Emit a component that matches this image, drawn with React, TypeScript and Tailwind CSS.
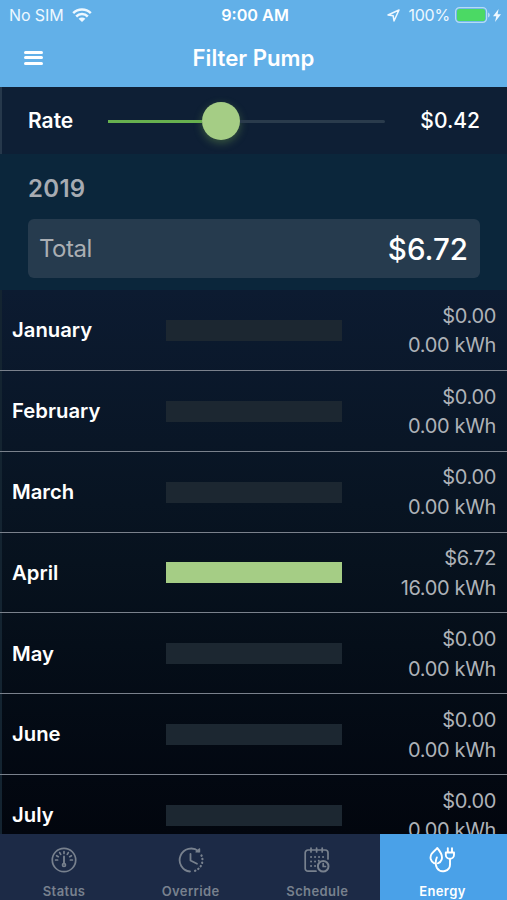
import { ReactNode } from 'react'

type Month = { name: string; cost: string; usage: string; active?: boolean }

const months: Month[] = [
  { name: 'January', cost: '$0.00', usage: '0.00 kWh' },
  { name: 'February', cost: '$0.00', usage: '0.00 kWh' },
  { name: 'March', cost: '$0.00', usage: '0.00 kWh' },
  { name: 'April', cost: '$6.72', usage: '16.00 kWh', active: true },
  { name: 'May', cost: '$0.00', usage: '0.00 kWh' },
  { name: 'June', cost: '$0.00', usage: '0.00 kWh' },
  { name: 'July', cost: '$0.00', usage: '0.00 kWh' },
]

function WifiIcon() {
  return (
    <svg width="20" height="14" viewBox="0 0 20 14" fill="none" stroke="currentColor" strokeWidth="2.5">
      <path d="M1.2 5.2a12.4 12.4 0 0 1 17.6 0" />
      <path d="M4.2 8.500a8.200 8.200 0 0 1 11.600 0" />
      <path d="M6.600 10.800a4.800 4.800 0 0 1 6.800 0L10 14z" fill="currentColor" stroke="none" />
    </svg>
  )
}

function LocationIcon() {
  return (
    <svg width="13" height="13" viewBox="0 0 13 13" fill="none" stroke="currentColor" strokeWidth="1.5" strokeLinejoin="round">
      <path d="M12 1 1 6l5.200.8L7 12z" />
    </svg>
  )
}

function BatteryIcon() {
  return (
    <svg width="36" height="16" viewBox="0 0 36 16" fill="none">
      <rect x="0.6" y="0.6" width="31" height="14.800" rx="4" stroke="#b5dbf5" strokeWidth="1.200" />
      <rect x="2" y="2" width="28.200" height="12" rx="2.600" fill="#4bd964" />
      <path d="M33 5.500c2.400.8 2.400 4.200 0 5z" fill="#b5dbf5" />
    </svg>
  )
}

function BoltIcon() {
  return (
    <svg width="8" height="13" viewBox="0 0 8 13" fill="currentColor">
      <path d="M5.600 0 0 7.300h3.300L2 13l6-7.700H4.600z" />
    </svg>
  )
}

function GaugeIcon() {
  return (
    <svg width="26" height="26" viewBox="0 0 26 26" fill="none" stroke="currentColor" strokeWidth="1.700" strokeLinecap="round">
      <circle cx="13" cy="13" r="11.700" />
      <path d="M13 4.500v2M8.700 5.600l1 1.800M17.300 5.600l-1 1.800M5.600 8.700l1.700 1M20.400 8.700l-1.700 1M4.600 13h2M21.400 13h-2" />
      <path d="M13 9.500v7" strokeWidth="1.900" />
      <circle cx="13" cy="18" r="1.500" />
    </svg>
  )
}

function OverrideIcon() {
  return (
    <svg width="26" height="26" viewBox="0 0 26 26" fill="none" stroke="currentColor" strokeWidth="1.800" strokeLinecap="round">
      <path d="M12 24.500A11.500 11.500 0 1 1 20.500 4.200" />
      <path d="M21.600 1.800v3.200h-3.600z" strokeLinejoin="round" fill="currentColor" strokeWidth="1.200" />
      <path d="M12.500 7v6.500l6.500 3.200" strokeLinejoin="round" />
      <path d="M23.500 8.500a11.500 11.500 0 0 1-8.500 15.900" strokeWidth="2.200" strokeDasharray="0.300 3.300" />
    </svg>
  )
}

function ScheduleIcon() {
  return (
    <svg width="26" height="26" viewBox="0 0 26 26" fill="none" stroke="currentColor" strokeWidth="1.700" strokeLinecap="round">
      <path d="M12 24.200H4A2.800 2.800 0 0 1 1.200 21.400V5.800A2.800 2.800 0 0 1 4 3h17.200A2.800 2.800 0 0 1 24 5.800V12" />
      <path d="M7 1v4M12.600 1v4M18.200 1v4" />
      <path d="M7 10h.1M11 10h.1M15 10h.1M19 10h.1M7 14.500h.1M11 14.500h.1M7 19h.1M11 19h.1M14.700 13.800h.1" strokeWidth="1.900" />
      <circle cx="19.200" cy="19.200" r="5.300" strokeWidth="2" />
      <path d="M19.200 16.500v3h2.300" />
    </svg>
  )
}

function EnergyIcon() {
  return (
    <svg width="26" height="26" viewBox="0 0 26 26" fill="none" stroke="currentColor" strokeWidth="1.900" strokeLinecap="round" strokeLinejoin="round">
      <path d="M5.300 16.300C1.300 14.200.6 10 2.700 6.800 4.400 4.200 6.800 3 8.200 1c3.600 4.100 5.700 8 4.400 11.600-.7 2-2 3.200-3.800 3.700" />
      <path d="M7.800 10.500c-1.600 4-1.600 7.200.2 10.500 3.600 5.600 13 3.500 13-3.500v-5.500" />
      <path d="M16.800 5.500h8.200v2.200a4.100 4.100 0 0 1-8.200 0zM18.800 5V1.200M23 5V1.200" />
    </svg>
  )
}

function Tab({ icon, label, active }: { icon: ReactNode; label: string; active?: boolean }) {
  return (
    <div
      className={`flex flex-1 flex-col items-center pt-[13px] ${
        active ? 'bg-[#4aa1e8] pr-0.5 text-white' : 'bg-[#1c2a46] pl-[1.500px] text-[#78818e]'
      }`}
    >
      {icon}
      <span className="mt-[10px] text-[13px] leading-4 font-semibold tracking-[0.4px]">{label}</span>
    </div>
  )
}

function MonthRow({ month }: { month: Month }) {
  return (
    <li className="flex h-[80.85px] shrink-0 items-center border-b border-[#7a818c] pt-px pr-[11px] pl-3">
      <div className="w-[154px] text-[20.300px] font-semibold text-white">{month.name}</div>
      <div className={`h-[21px] w-[176px] ${month.active ? 'bg-[#a5cd85]' : 'bg-[#1c2731]'}`} />
      <div className="flex-1 pt-0.5 text-right text-[20px] leading-[29.700px] tracking-[-0.350px] text-[#aeb2b8]">
        <div>{month.cost}</div>
        <div>{month.usage}</div>
      </div>
    </li>
  )
}

export default function App() {
  return (
    <div className="flex h-[900px] w-[507px] flex-col overflow-hidden bg-[#02070f] font-['Inter',sans-serif]">
      <header className="h-[87px] shrink-0 bg-[#62b0e8] text-white">
        <div className="grid h-[30px] grid-cols-3 items-center pr-1.5 pl-[9px] text-[16px]">
          <div className="flex items-center gap-[8px] text-[#eef8ff]">
            <span className="tracking-[-0.100px]">No SIM</span>
            <WifiIcon />
          </div>
          <div className="text-center text-[16.200px] font-semibold">9:00 AM</div>
          <div className="flex items-center justify-end text-[#eef8ff]">
            <LocationIcon />
            <span className="mr-[5px] ml-[8px] tracking-[-0.200px]">100%</span>
            <BatteryIcon />
            <span className="ml-[2px]">
              <BoltIcon />
            </span>
          </div>
        </div>
        <div className="grid h-[55px] grid-cols-[1fr_auto_1fr] items-center px-6">
          <div className="flex w-[19px] flex-col gap-[2.500px]">
            <span className="h-[3px] rounded-full bg-white" />
            <span className="h-[3px] rounded-full bg-white" />
            <span className="h-[3px] rounded-full bg-white" />
          </div>
          <h1 className="text-[22.200px] font-semibold">Filter Pump</h1>
        </div>
      </header>

      <section className="flex h-[67px] shrink-0 items-center border-l-2 border-[#26384b] bg-[#0e1f35] pr-[27px] pl-[26px] text-[21px] text-white">
        <span className="w-[80px] font-semibold">Rate</span>
        <div className="flex w-[277px] items-center">
          <div className="mt-0.5 h-[3px] w-[94px] bg-[#67b04f]" />
          <div className="size-[38px] rounded-full bg-[#a5cd85] shadow-[0_3px_8px_rgba(120,170,80,0.400)]" />
          <div className="mt-0.5 h-[3px] flex-1 rounded-r-full bg-[#2a3b4c]" />
        </div>
        <span className="flex-1 text-right font-medium">$0.42</span>
      </section>

      <section className="h-[136px] shrink-0 bg-[#0b263b] pt-5 pr-[27px] pl-7">
        <h2 className="text-[24px] leading-[30px] font-semibold tracking-[0.300px] text-[#a7abb2]">2019</h2>
        <div className="mt-[15px] flex h-[59px] items-center justify-between rounded-md bg-[#263b4e] pt-px pr-3 pl-[11px]">
          <span className="text-[24px] tracking-[-0.500px] text-[#aaaeb3]">Total</span>
          <span className="text-[29.500px] font-medium text-white">$6.72</span>
        </div>
      </section>

      <ul className="flex min-h-0 flex-1 flex-col overflow-hidden bg-linear-to-b from-[#0c1b31] via-[#07121e] to-[#02060e] shadow-[inset_2px_0_#142431]">
        {months.map((month) => (
          <MonthRow key={month.name} month={month} />
        ))}
      </ul>

      <nav className="flex h-[66px] shrink-0">
        <Tab icon={<GaugeIcon />} label="Status" />
        <Tab icon={<OverrideIcon />} label="Override" />
        <Tab icon={<ScheduleIcon />} label="Schedule" />
        <Tab icon={<EnergyIcon />} label="Energy" active />
      </nav>
    </div>
  )
}
